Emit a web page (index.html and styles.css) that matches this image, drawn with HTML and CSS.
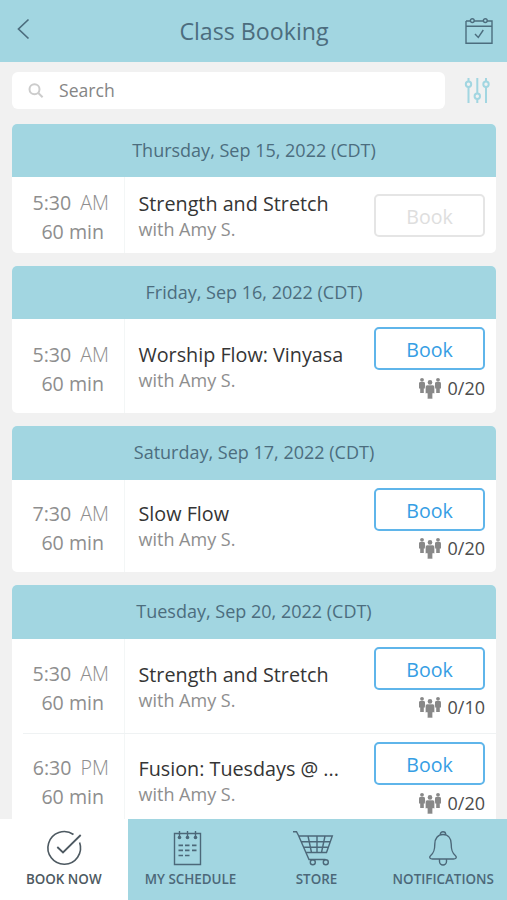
FILE: index.html
```html
<!DOCTYPE html>
<html lang="en">
<head>
<meta charset="utf-8">
<title>Class Booking</title>
<link rel="stylesheet" href="styles.css">
</head>
<body>
<svg class="defs" width="0" height="0">
  <symbol id="people" viewBox="0 0 24 23">
    <g id="person"><circle cx="4" cy="2.800" r="1.900"/><path d="M1 6.500q0-1.400 1.400-1.400h3.200q1.400 0 1.400 1.400v5H5.800V16H2.200v-4.500H1z"/></g>
    <use href="#person" x="16"/>
    <path d="M7.300 10q0-2 1.800-2h5.800q1.800 0 1.800 2v6.500h-2V22H9.300v-5.500h-2z" stroke="#fff" stroke-width=".6"/>
    <circle cx="12" cy="5.400" r="2.300"/>
  </symbol>
</svg>
<div class="app">
  <header class="topbar">
    <svg class="back" viewBox="0 0 14 22"><path d="M11.500 1.500 1.500 11l10 9.500"/></svg>
    <h1>Class Booking</h1>
    <svg class="calendar" viewBox="0 0 28 28"><path d="M1 4h4.500M9 4h9.500M22 4h5v22.300H1V4M1 9.200h26M10 17l3.300 3.500 5-7.500"/><circle cx="7.300" cy="3.600" r="1.900"/><circle cx="20.300" cy="3.600" r="1.900"/></svg>
  </header>
  <div class="tools">
    <div class="search">
      <svg viewBox="0 0 16 16"><circle cx="6.500" cy="6.300" r="5"/><path d="m10.300 10 4.300 4.200"/></svg>
      <span>Search</span>
    </div>
    <svg class="filter" viewBox="0 0 26 26"><path d="M4.500 0v3.500M4.500 9v16M13.300 0v15.500M13.300 21.200V25M22 0v3.500M22 9v16"/><circle cx="4.500" cy="6.200" r="2.700"/><circle cx="13.300" cy="18.300" r="2.700"/><circle cx="22" cy="6.200" r="2.700"/></svg>
  </div>
  <main class="days">
    <section class="day">
      <h2>Thursday, Sep 15, 2022 (CDT)</h2>
      <article class="row short">
        <div class="time"><p>5:30 <span>AM</span></p><p class="length">60 min</p></div>
        <div class="info"><h3>Strength and Stretch</h3><p>with Amy S.</p></div>
        <div class="action"><button disabled>Book</button></div>
      </article>
    </section>
    <section class="day">
      <h2>Friday, Sep 16, 2022 (CDT)</h2>
      <article class="row">
        <div class="time"><p>5:30 <span>AM</span></p><p class="length">60 min</p></div>
        <div class="info"><h3>Worship Flow: Vinyasa</h3><p>with Amy S.</p></div>
        <div class="action"><button>Book</button><div class="count"><svg><use href="#people"/></svg><span>0/20</span></div></div>
      </article>
    </section>
    <section class="day">
      <h2>Saturday, Sep 17, 2022 (CDT)</h2>
      <article class="row compact">
        <div class="time"><p>7:30 <span>AM</span></p><p class="length">60 min</p></div>
        <div class="info"><h3>Slow Flow</h3><p>with Amy S.</p></div>
        <div class="action"><button>Book</button><div class="count"><svg><use href="#people"/></svg><span>0/20</span></div></div>
      </article>
    </section>
    <section class="day">
      <h2>Tuesday, Sep 20, 2022 (CDT)</h2>
      <article class="row">
        <div class="time"><p>5:30 <span>AM</span></p><p class="length">60 min</p></div>
        <div class="info"><h3>Strength and Stretch</h3><p>with Amy S.</p></div>
        <div class="action"><button>Book</button><div class="count"><svg><use href="#people"/></svg><span>0/10</span></div></div>
      </article>
      <div class="divider"></div>
      <article class="row last">
        <div class="time"><p>6:30 <span>PM</span></p><p class="length">60 min</p></div>
        <div class="info"><h3>Fusion: Tuesdays @ ...</h3><p>with Amy S.</p></div>
        <div class="action"><button>Book</button><div class="count"><svg><use href="#people"/></svg><span>0/20</span></div></div>
      </article>
    </section>
  </main>
  <nav class="tabs">
    <a class="tab active">
      <svg viewBox="0 0 40 36"><path d="M35.600 12.500A16.300 16.300 0 1 1 29.500 4.500"/><path d="m13.300 17 5.700 5.500L36.700 5" stroke-width="1.800"/></svg>
      <span>BOOK NOW</span>
    </a>
    <a class="tab">
      <svg viewBox="3.500 0 40 36"><path d="M7 3.500h26v31H7z"/><path d="M12 1v6M20 1v6M28 1v6"/><g fill="currentColor" stroke="none"><circle cx="12" cy="7.500" r="1.800"/><circle cx="20" cy="7.500" r="1.800"/><circle cx="28" cy="7.500" r="1.800"/></g><path d="M11 15.300h4.500M17.500 15.300H22M24.500 15.300H29M11 20.300h4.500M17.500 20.300H22M24.500 20.300H29M11 25.500h4.500M17.500 25.500H22" stroke-width="1.700"/></svg>
      <span>MY SCHEDULE</span>
    </a>
    <a class="tab">
      <svg viewBox="4 0 40 36"><path d="M0 1.700h3.500l2 3.800L16 29.500h16.500M6 6h33.300l-5.800 16.500H13.200M8.500 11.800h29M11 17.300h24.500M15 6l3.500 16.500M24 6v16.500M32 6l-3.500 16.500"/><circle cx="19.800" cy="32.200" r="2.500"/><circle cx="32.800" cy="32.200" r="2.500"/></svg>
      <span>STORE</span>
    </a>
    <a class="tab">
      <svg viewBox="0 0 40 36"><path d="M17.300 4.500a2.700 2.700 0 1 1 5.400 0M20 4.500c-5.200 0-8.200 4-8.200 9.500 0 6.500-1 9-4.300 11.700-2 2 0 3.300 2 3.300h21c2 0 4-1.300 2-3.300C29.200 23 28.200 20.500 28.200 14c0-5.500-3-9.500-8.200-9.500zM16.500 29v2.500a3.500 3.500 0 0 0 7 0V29"/></svg>
      <span>NOTIFICATIONS</span>
    </a>
  </nav>
</div>
</body>
</html>
```
FILE: styles.css
```css
* { box-sizing: border-box; margin: 0; padding: 0; }
body { font-family: "Open Sans", sans-serif; background: #f1f1f1; color: #8e8e8e; }
.defs { position: absolute; }
.app { display: flex; flex-direction: column; height: 900px; overflow: hidden; }
svg { flex: none; overflow: visible; fill: none; stroke: currentColor; stroke-width: 1.4; }
h1, h2, h3 { font-weight: 400; }

.topbar { flex: none; display: flex; align-items: center; height: 61.500px; padding: 0 14px 0 17px; background: #a2d6e1; color: #4c6d7e; }
.topbar h1 { flex: 1; padding: 1px 0 0 12px; text-align: center; font-size: 23.200px; line-height: 32px; }
.back { width: 14px; height: 22px; margin-bottom: 4px; stroke-width: 1.7; }
.calendar { width: 28px; height: 28px; }

.tools { flex: none; display: flex; align-items: center; height: 62px; padding: 0 17px 4px 12px; }
.search { display: flex; align-items: center; width: 433px; height: 37px; padding-left: 16px; border-radius: 6px; background: #fff; color: #858585; font-size: 17.600px; line-height: 24px; }
.search span { margin-top: -1px; }
.search svg { width: 16px; height: 16px; margin-right: 15px; color: #ccc; stroke-width: 2; }
.filter { width: 26px; height: 26px; margin-left: auto; color: #a2d6e1; stroke-width: 2; }

.days { flex: 1; min-height: 0; overflow: hidden; display: flex; flex-direction: column; gap: 13px; padding: 0 11px 0 12px; }
.day { flex: none; border-radius: 5px; overflow: hidden; background: #fff; }
.day h2 { height: 53.500px; background: #a2d6e1; color: #4c6d7e; font-size: 18px; line-height: 53px; text-align: center; }
.row { display: grid; grid-template-columns: 113px 1fr 122px; height: 94px; }
.time { border-right: 1px solid #f3f6f6; padding-top: 20.500px; text-align: right; font-size: 19.600px; line-height: 29px; }
.time p { padding-right: 15px; }
.time span { font-weight: 300; margin-left: 4px; }
.time .length { padding-right: 20px; }
.info { padding: 22px 0 0 13.500px; }
.info h3 { color: #353535; font-size: 19.750px; line-height: 28px; white-space: nowrap; }
.info p { font-size: 18px; line-height: 22px; }
.action { padding: 8px 11px 0 0; }
button { display: block; width: 111px; height: 43px; border: 2px solid #5fb5ea; border-radius: 5px; background: #fff; color: #369ee4; font: 400 19.600px/39px "Open Sans", sans-serif; padding-top: 1px; }
button:disabled { border-color: #e5e5e5; color: #dedede; }
.count { display: flex; justify-content: flex-end; align-items: center; gap: 6px; height: 35px; color: #4c4c4c; font-size: 18px; }
.count svg { width: 24px; height: 23px; margin-top: 1px; color: #888; fill: #888; stroke: none; }
.short { height: 75.500px; }
.short .time { padding-top: 11px; }
.short .info { padding-top: 12.500px; }
.short .action { padding-top: 16.500px; }
.compact { height: 92.500px; }
.compact .time { padding-top: 19px; }
.compact .info { padding-top: 20.500px; }
.compact .count { height: 34px; }
.last .time { padding-top: 19px; }
.last .info { padding-top: 21px; }
.divider { height: 1.500px; margin-left: 11px; background: #eff2f3; }

.tabs { flex: none; display: grid; grid-template-columns: 127.500px 126px 126px 1fr; height: 81px; background: #a2d6e1; color: #4c6879; }
.tab { display: flex; flex-direction: column; align-items: center; padding-top: 11px; font-size: 13.400px; font-weight: 600; line-height: 18px; white-space: nowrap; }
.tab svg { width: 40px; height: 36px; margin-bottom: 4px; }
.active { background: #fff; color: #4d5961; }
.active svg { stroke-width: 1.6; }
```
